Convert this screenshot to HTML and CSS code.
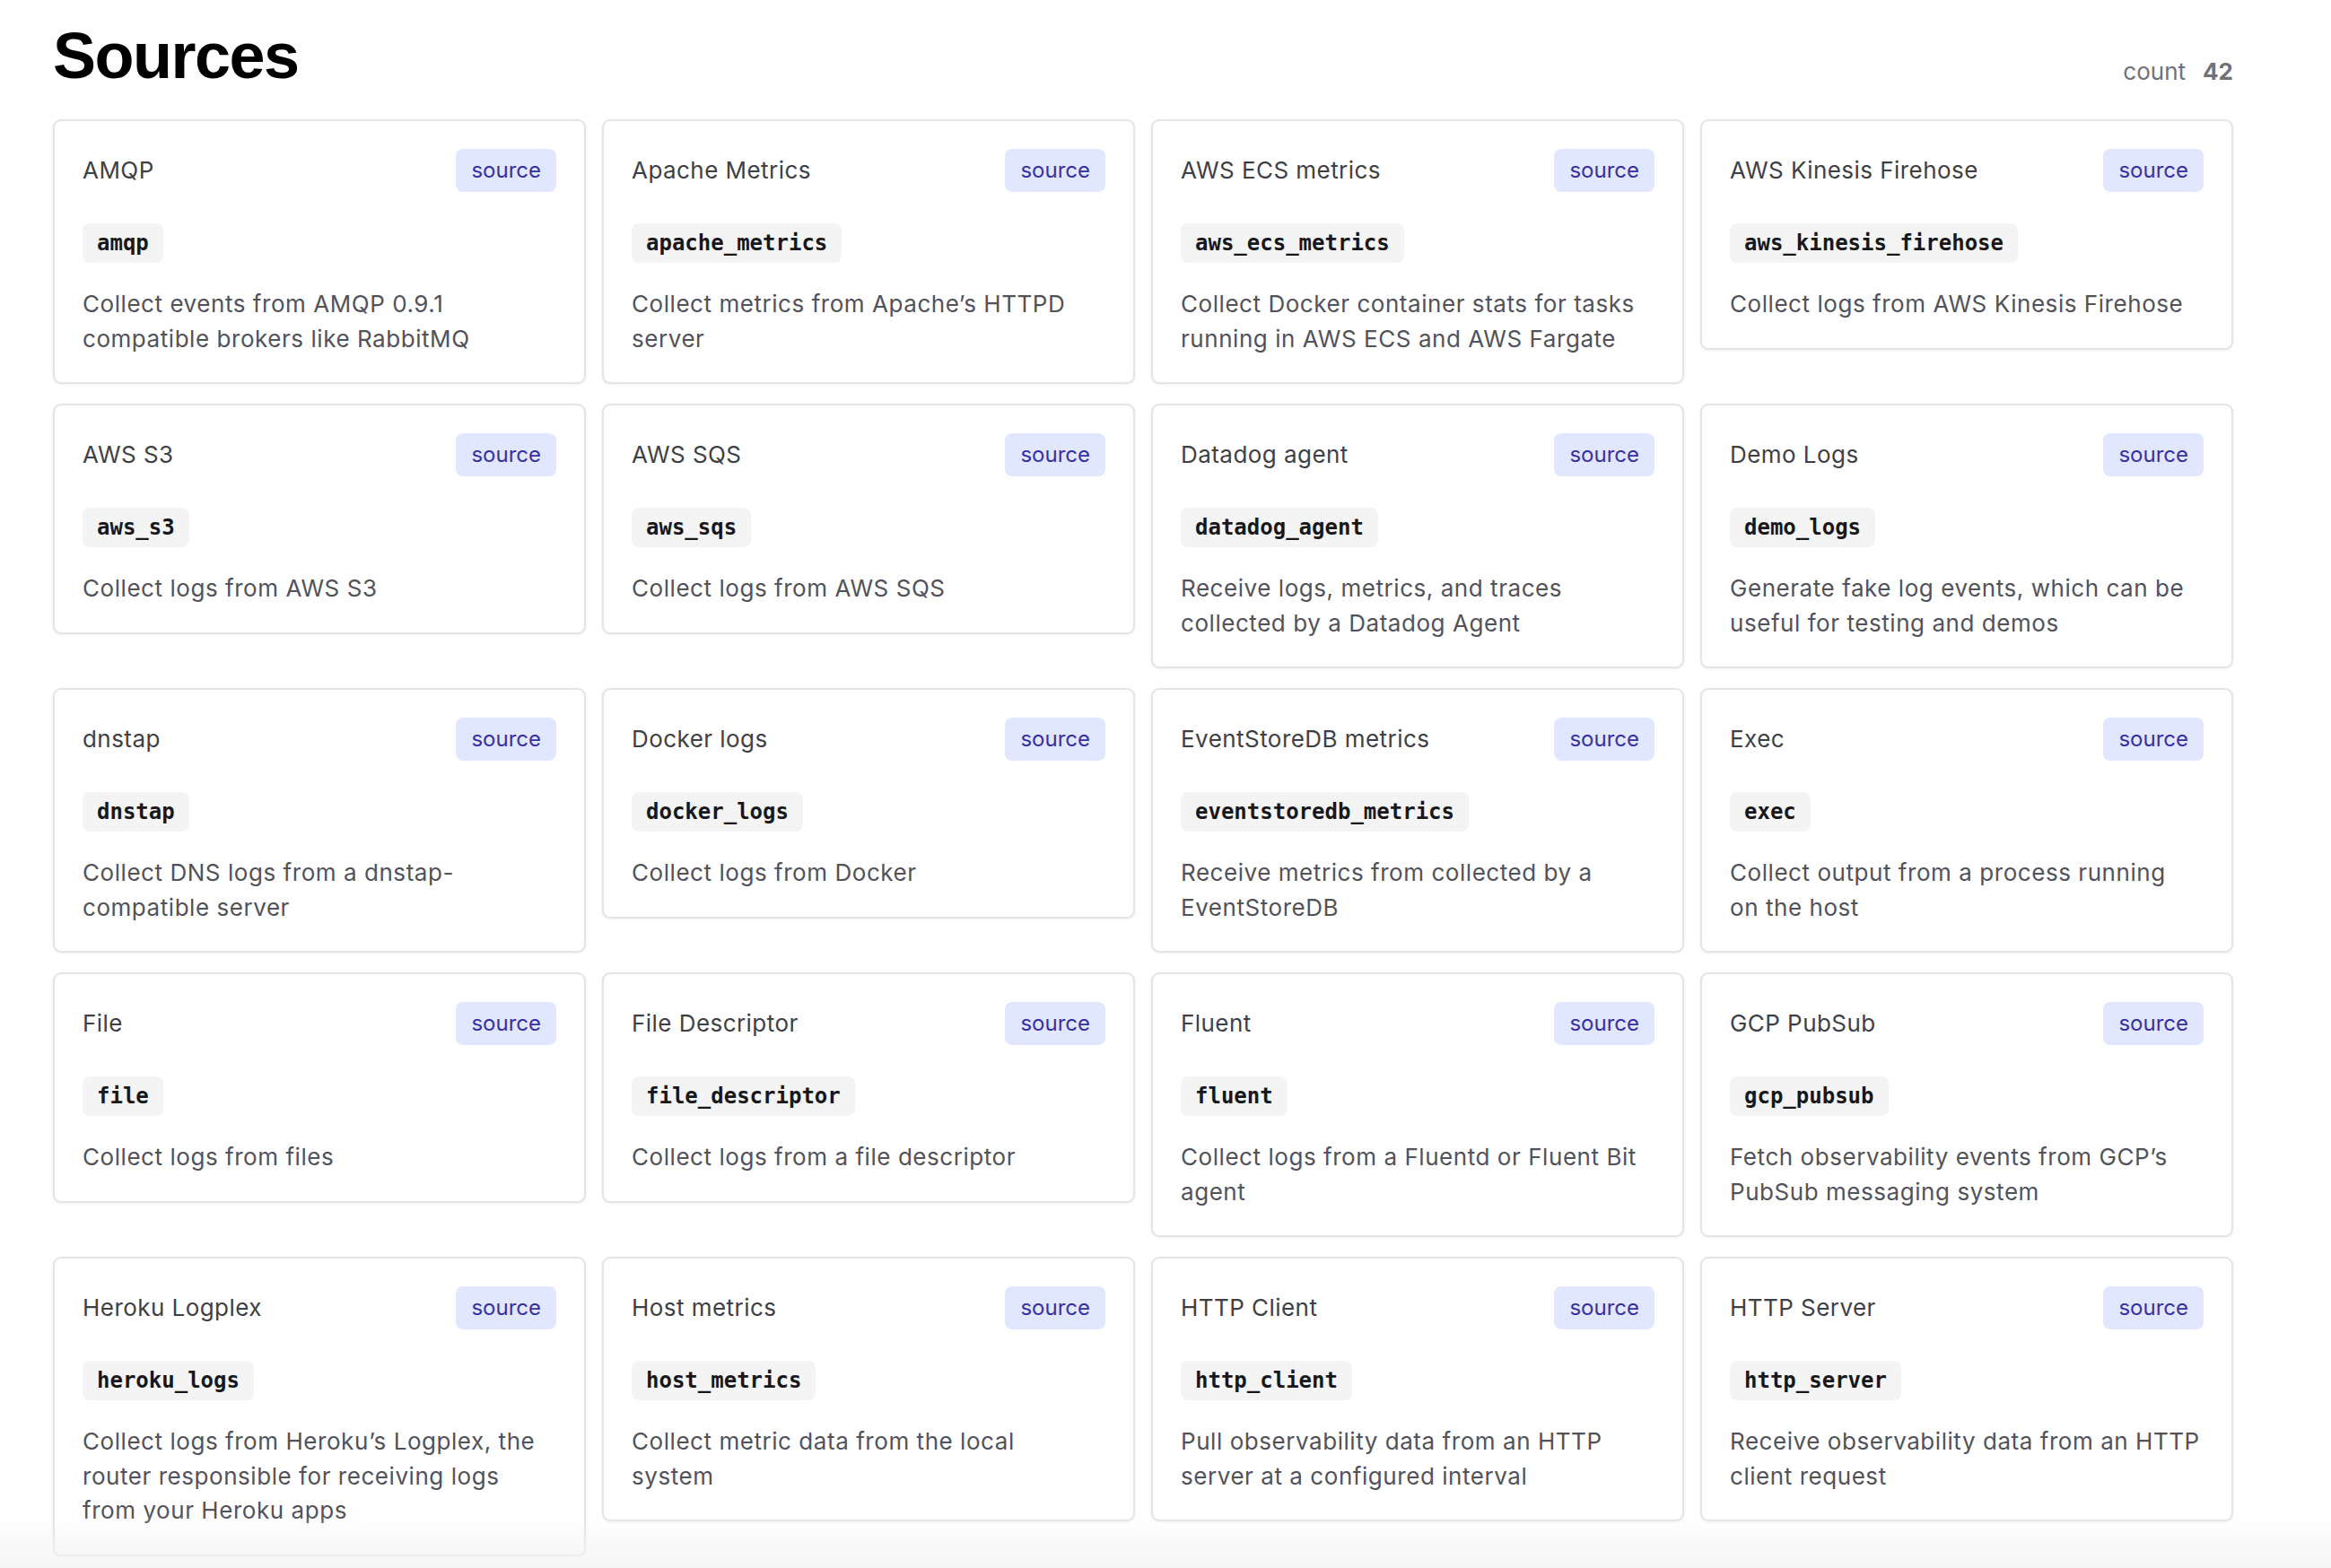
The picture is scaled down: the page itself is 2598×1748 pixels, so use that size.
FILE: index.html
```html
<!DOCTYPE html>
<html lang="en">
<head>
<meta charset="utf-8">
<title>Sources</title>
<link rel="stylesheet" href="styles.css">
</head>
<body>
<main class="page">
  <header class="page-head">
    <h1 class="page-title">Sources</h1>
    <div class="count"><span class="count-label">count</span><span class="count-num">42</span></div>
  </header>
  <section class="grid">
    <article class="card"><div class="card-head"><h2 class="card-title">AMQP</h2><span class="badge">source</span></div><code class="chip">amqp</code><p class="desc">Collect events from AMQP 0.9.1<br>compatible brokers like RabbitMQ</p></article>
    <article class="card"><div class="card-head"><h2 class="card-title">Apache Metrics</h2><span class="badge">source</span></div><code class="chip">apache_metrics</code><p class="desc">Collect metrics from Apache’s HTTPD<br>server</p></article>
    <article class="card"><div class="card-head"><h2 class="card-title">AWS ECS metrics</h2><span class="badge">source</span></div><code class="chip">aws_ecs_metrics</code><p class="desc">Collect Docker container stats for tasks<br>running in AWS ECS and AWS Fargate</p></article>
    <article class="card"><div class="card-head"><h2 class="card-title">AWS Kinesis Firehose</h2><span class="badge">source</span></div><code class="chip">aws_kinesis_firehose</code><p class="desc">Collect logs from AWS Kinesis Firehose</p></article>

    <article class="card"><div class="card-head"><h2 class="card-title">AWS S3</h2><span class="badge">source</span></div><code class="chip">aws_s3</code><p class="desc">Collect logs from AWS S3</p></article>
    <article class="card"><div class="card-head"><h2 class="card-title">AWS SQS</h2><span class="badge">source</span></div><code class="chip">aws_sqs</code><p class="desc">Collect logs from AWS SQS</p></article>
    <article class="card"><div class="card-head"><h2 class="card-title">Datadog agent</h2><span class="badge">source</span></div><code class="chip">datadog_agent</code><p class="desc">Receive logs, metrics, and traces<br>collected by a Datadog Agent</p></article>
    <article class="card"><div class="card-head"><h2 class="card-title">Demo Logs</h2><span class="badge">source</span></div><code class="chip">demo_logs</code><p class="desc">Generate fake log events, which can be<br>useful for testing and demos</p></article>

    <article class="card"><div class="card-head"><h2 class="card-title">dnstap</h2><span class="badge">source</span></div><code class="chip">dnstap</code><p class="desc">Collect DNS logs from a dnstap-<br>compatible server</p></article>
    <article class="card"><div class="card-head"><h2 class="card-title">Docker logs</h2><span class="badge">source</span></div><code class="chip">docker_logs</code><p class="desc">Collect logs from Docker</p></article>
    <article class="card"><div class="card-head"><h2 class="card-title">EventStoreDB metrics</h2><span class="badge">source</span></div><code class="chip">eventstoredb_metrics</code><p class="desc">Receive metrics from collected by a<br>EventStoreDB</p></article>
    <article class="card"><div class="card-head"><h2 class="card-title">Exec</h2><span class="badge">source</span></div><code class="chip">exec</code><p class="desc">Collect output from a process running<br>on the host</p></article>

    <article class="card"><div class="card-head"><h2 class="card-title">File</h2><span class="badge">source</span></div><code class="chip">file</code><p class="desc">Collect logs from files</p></article>
    <article class="card"><div class="card-head"><h2 class="card-title">File Descriptor</h2><span class="badge">source</span></div><code class="chip">file_descriptor</code><p class="desc">Collect logs from a file descriptor</p></article>
    <article class="card"><div class="card-head"><h2 class="card-title">Fluent</h2><span class="badge">source</span></div><code class="chip">fluent</code><p class="desc">Collect logs from a Fluentd or Fluent Bit<br>agent</p></article>
    <article class="card"><div class="card-head"><h2 class="card-title">GCP PubSub</h2><span class="badge">source</span></div><code class="chip">gcp_pubsub</code><p class="desc">Fetch observability events from GCP’s<br>PubSub messaging system</p></article>

    <article class="card"><div class="card-head"><h2 class="card-title">Heroku Logplex</h2><span class="badge">source</span></div><code class="chip">heroku_logs</code><p class="desc">Collect logs from Heroku’s Logplex, the<br>router responsible for receiving logs<br>from your Heroku apps</p></article>
    <article class="card"><div class="card-head"><h2 class="card-title">Host metrics</h2><span class="badge">source</span></div><code class="chip">host_metrics</code><p class="desc">Collect metric data from the local<br>system</p></article>
    <article class="card"><div class="card-head"><h2 class="card-title">HTTP Client</h2><span class="badge">source</span></div><code class="chip">http_client</code><p class="desc">Pull observability data from an HTTP<br>server at a configured interval</p></article>
    <article class="card"><div class="card-head"><h2 class="card-title">HTTP Server</h2><span class="badge">source</span></div><code class="chip">http_server</code><p class="desc">Receive observability data from an HTTP<br>client request</p></article>
  </section>
</main>
<div class="bottom-fade"></div>
</body>
</html>
```

FILE: styles.css
```css
html, body {
  margin: 0;
  padding: 0;
  background: #ffffff;
  height: 1748px;
  overflow: hidden;
}

body {
  font-family: Inter, "Noto Sans", sans-serif;
  color: #52525b;
}

.page {
  width: 2430px;
  padding: 26px 0 0 59px;
}

.page-head {
  display: flex;
  justify-content: space-between;
  align-items: flex-end;
  margin-bottom: 35px;
}

.page-title {
  margin: 0;
  font-family: "Liberation Sans", Arial, sans-serif;
  font-weight: 700;
  font-size: 72px;
  line-height: 72px;
  letter-spacing: -1.5px;
  color: #000000;
}

.count {
  display: flex;
  gap: 19px;
  font-size: 26px;
  line-height: 32px;
  margin-bottom: 2px;
  color: #71717a;
}

.count-num {
  font-weight: 700;
}

.grid {
  display: grid;
  grid-template-columns: repeat(4, 594px);
  column-gap: 18px;
  row-gap: 22px;
  align-items: start;
}

.card {
  border: 2px solid #e4e4e7;
  border-radius: 9px;
  padding: 31px 31px 29px;
  box-shadow: 0 1px 3px rgba(0, 0, 0, 0.06);
  display: flex;
  flex-direction: column;
  align-items: flex-start;
  background: #ffffff;
}

.card-head {
  align-self: stretch;
  display: flex;
  justify-content: space-between;
  align-items: center;
  margin-bottom: 35px;
}

.card-title {
  margin: 0;
  font-size: 26px;
  font-weight: 400;
  line-height: 32px;
  letter-spacing: 0.45px;
  color: #3f3f46;
}

.badge {
  display: inline-block;
  background: #e0e7ff;
  color: #3730a3;
  font-size: 24px;
  line-height: 28px;
  padding: 10px 17px;
  border-radius: 8px;
}

.chip {
  display: inline-block;
  background: #f4f4f5;
  color: #18181b;
  font-family: "DejaVu Sans Mono", "Liberation Mono", monospace;
  font-weight: 700;
  font-size: 24px;
  line-height: 28px;
  padding: 8px 16px;
  border-radius: 8px;
  margin-bottom: 27px;
}

.desc {
  margin: 0;
  font-size: 26px;
  line-height: 38.5px;
  letter-spacing: 0.55px;
  white-space: nowrap;
  color: #52525b;
}

.bottom-fade {
  position: fixed;
  left: 0;
  right: 0;
  bottom: 0;
  height: 60px;
  background: linear-gradient(to bottom, rgba(243, 243, 243, 0), rgba(243, 243, 243, 0.85));
  pointer-events: none;
}
```
